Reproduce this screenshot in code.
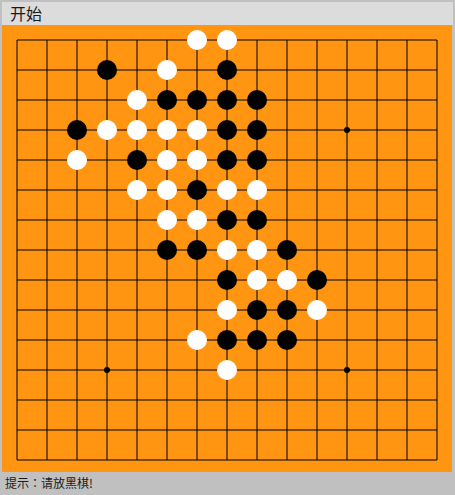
import React from "react";

const stones: [number, number, "b" | "w"][] = [
  [6, 0, "w"], [7, 0, "w"],
  [3, 1, "b"], [5, 1, "w"], [7, 1, "b"],
  [4, 2, "w"], [5, 2, "b"], [6, 2, "b"], [7, 2, "b"], [8, 2, "b"],
  [2, 3, "b"], [3, 3, "w"], [4, 3, "w"], [5, 3, "w"], [6, 3, "w"], [7, 3, "b"], [8, 3, "b"],
  [2, 4, "w"], [4, 4, "b"], [5, 4, "w"], [6, 4, "w"], [7, 4, "b"], [8, 4, "b"],
  [4, 5, "w"], [5, 5, "w"], [6, 5, "b"], [7, 5, "w"], [8, 5, "w"],
  [5, 6, "w"], [6, 6, "w"], [7, 6, "b"], [8, 6, "b"],
  [5, 7, "b"], [6, 7, "b"], [7, 7, "w"], [8, 7, "w"], [9, 7, "b"],
  [7, 8, "b"], [8, 8, "w"], [9, 8, "w"], [10, 8, "b"],
  [7, 9, "w"], [8, 9, "b"], [9, 9, "b"], [10, 9, "w"],
  [6, 10, "w"], [7, 10, "b"], [8, 10, "b"], [9, 10, "b"],
  [7, 11, "w"],
];

const stars: [number, number][] = [
  [3, 3], [11, 3], [7, 7], [3, 11], [11, 11],
];

function Board() {
  const idx = Array.from({ length: 15 }, (_, i) => i);
  const p = (i: number) => 15 + 30 * i;
  return (
    <svg width="450" height="447" viewBox="0 0 450 447" className="block">
      {idx.map((i) => (
        <line key={"h" + i} x1={15} y1={p(i)} x2={435} y2={p(i)} stroke="#000" strokeWidth={1} />
      ))}
      {idx.map((i) => (
        <line key={"v" + i} x1={p(i)} y1={15} x2={p(i)} y2={435} stroke="#000" strokeWidth={1} />
      ))}
      {stars.map(([c, r]) => (
        <circle key={"s" + c + "-" + r} cx={p(c)} cy={p(r)} r={3} fill="#000" />
      ))}
      {stones.map(([c, r, k]) => (
        <circle key={"st" + c + "-" + r} cx={p(c)} cy={p(r)} r={10} fill={k === "b" ? "#000" : "#fff"} />
      ))}
    </svg>
  );
}

export default function App() {
  return (
    <div className="w-[455px] h-[495px] bg-[#c0c0c0] pt-[2px] pl-[2px] font-['Noto_Sans_CJK_SC','Liberation_Sans',sans-serif] text-[#1a1a1a]">
      <div className="w-[451px] h-[23px] bg-[#dcdcdc] pl-[8px] text-[16px] leading-[23px]">开始</div>
      <div className="w-[450px] h-[447px] bg-[#ff9511]">
        <Board />
      </div>
      <div className="pl-[3px] pt-[2px] text-[12px] leading-[18px] font-['Noto_Sans_CJK_TC','Liberation_Sans',sans-serif]">提示：请放黑棋!</div>
    </div>
  );
}
